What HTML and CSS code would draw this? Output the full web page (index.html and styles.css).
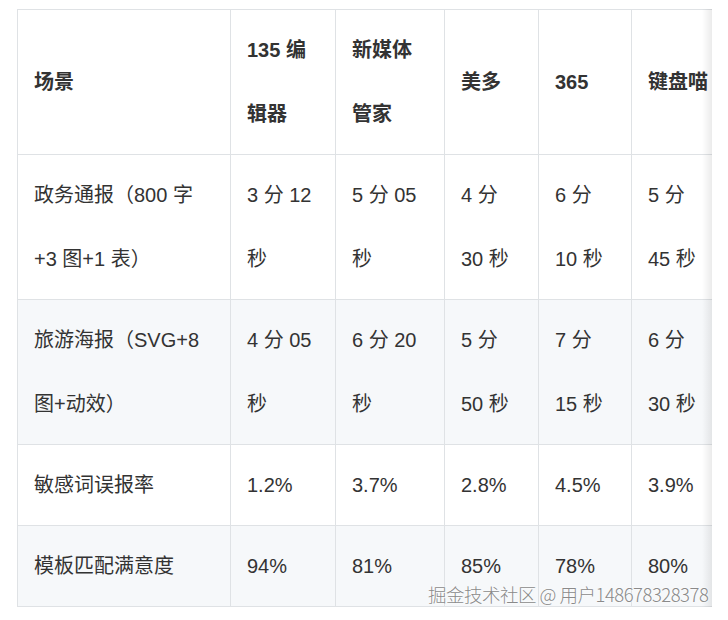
FILE: index.html
```html
<!DOCTYPE html>
<html lang="zh-CN">
<head>
<meta charset="utf-8">
<title>编辑器对比</title>
<link rel="stylesheet" href="styles.css">
</head>
<body>
<div class="page">
  <div class="table-wrap">
    <table class="cmp">
      <colgroup>
        <col class="c1"><col class="c2"><col class="c3"><col class="c4"><col class="c5"><col class="c6">
      </colgroup>
      <thead>
        <tr>
          <th>场景</th>
          <th>135 编辑器</th>
          <th>新媒体管家</th>
          <th>美多</th>
          <th>365</th>
          <th>键盘喵</th>
        </tr>
      </thead>
      <tbody>
        <tr>
          <td>政务通报（800 字+3 图+1 表）</td>
          <td>3 分 12 秒</td>
          <td>5 分 05 秒</td>
          <td>4 分 30 秒</td>
          <td>6 分 10 秒</td>
          <td>5 分 45 秒</td>
        </tr>
        <tr class="alt">
          <td>旅游海报（SVG+8 图+动效）</td>
          <td>4 分 05 秒</td>
          <td>6 分 20 秒</td>
          <td>5 分 50 秒</td>
          <td>7 分 15 秒</td>
          <td>6 分 30 秒</td>
        </tr>
        <tr>
          <td>敏感词误报率</td>
          <td>1.2%</td>
          <td>3.7%</td>
          <td>2.8%</td>
          <td>4.5%</td>
          <td>3.9%</td>
        </tr>
        <tr class="alt">
          <td>模板匹配满意度</td>
          <td>94%</td>
          <td>81%</td>
          <td>85%</td>
          <td>78%</td>
          <td>80%</td>
        </tr>
      </tbody>
    </table>
  </div>
  <div class="watermark">掘金技术社区 @ 用户148678328378</div>
</div>
</body>
</html>
```

FILE: styles.css
```css
html, body {
  margin: 0;
  padding: 0;
  background: #ffffff;
}

.page {
  position: relative;
  width: 728px;
  height: 620px;
  padding: 9px 0 0 17px;
  box-sizing: border-box;
  font-family: "Liberation Sans", "Noto Sans CJK SC", sans-serif;
  color: #333333;
}

.table-wrap {
  position: relative;
  width: 695px;
  overflow: hidden;
}

.table-wrap::after {
  content: "";
  position: absolute;
  top: 0;
  right: 0;
  bottom: 0;
  width: 10px;
  background: linear-gradient(to right, rgba(0,0,0,0), rgba(0,0,0,0.08));
}

.cmp {
  border-collapse: collapse;
  table-layout: fixed;
  width: 710px;
  font-size: 20px;
}

.c1 { width: 213px; }
.c2 { width: 105px; }
.c3 { width: 109px; }
.c4 { width: 94px; }
.c5 { width: 93px; }
.c6 { width: 96px; }

.cmp th,
.cmp td {
  border: 1px solid #dfe2e5;
  padding: 8px 16px;
  line-height: 64px;
  text-align: left;
  vertical-align: middle;
}

.cmp th {
  font-weight: 700;
  color: #333333;
  background: #ffffff;
}

.cmp td {
  font-weight: 400;
}

.cmp tr.alt td {
  background: #f6f8fa;
}

.watermark {
  position: absolute;
  left: 428px;
  top: 582px;
  font-family: "Noto Sans CJK SC", sans-serif;
  font-weight: 300;
  font-size: 18.5px;
  line-height: 24px;
  color: #8a8a8a;
  white-space: nowrap;
  text-shadow: 0 0 2px #ffffff, 0 0 2px #ffffff;
  letter-spacing: -0.5px;
}
```
